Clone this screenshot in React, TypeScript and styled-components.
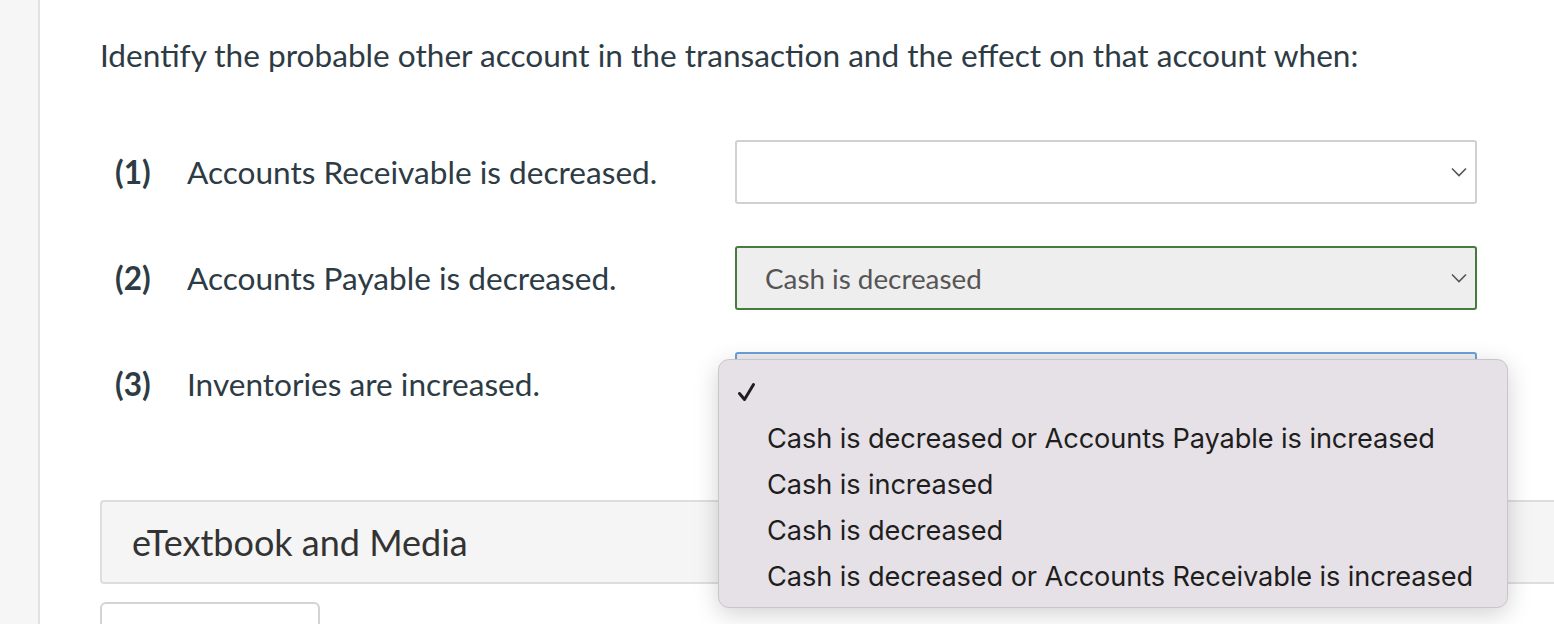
import React from 'react';
import styled, { createGlobalStyle } from 'styled-components';

const GlobalStyle = createGlobalStyle`
  html, body {
    margin: 0;
    padding: 0;
    background: #ffffff;
    overflow: hidden;
  }
  body {
    font-family: Lato, "Open Sans", sans-serif;
    color: #2d3b45;
  }
`;

const Page = styled.div`
  display: flex;
  height: 624px;
  overflow: hidden;
`;

const Sidebar = styled.div`
  width: 38px;
  flex-shrink: 0;
  background: #f6f6f6;
  border-right: 2px solid #e2e2e2;
`;

const Main = styled.div`
  flex: 1;
  padding: 35px 0 0 60px;
  position: relative;
`;

const Heading = styled.p`
  margin: 0 0 65px;
  font-size: 31.6px;
  line-height: 40px;
  color: #2d3b45;
`;

const QuestionList = styled.div`
  display: flex;
  flex-direction: column;
  gap: 42px;
  width: 1377px;
`;

const Row = styled.div`
  display: grid;
  grid-template-columns: 635px 742px;
  align-items: center;
  height: 64px;
`;

const Label = styled.div`
  display: flex;
  align-items: center;
  padding-left: 15px;
  font-size: 31.6px;
`;

const Num = styled.span`
  font-weight: 700;
  width: 72px;
`;

const Select = styled.div<{ $state?: 'correct' | 'focus' }>`
  position: relative;
  box-sizing: border-box;
  height: 64px;
  display: flex;
  align-items: center;
  padding: 0 28px;
  border-radius: 3px;
  font-size: 27.8px;
  color: #555555;
  background: ${(p) => (p.$state ? '#eeeeee' : '#ffffff')};
  border: 2px solid
    ${(p) =>
      p.$state === 'correct' ? '#477a3f' : p.$state === 'focus' ? '#6c9fdb' : '#d0d0d0'};
`;

const Chevron = styled.svg`
  position: absolute;
  right: 8px;
  top: 50%;
  margin-top: -5px;
  width: 16px;
  height: 10px;
`;

const Panel = styled.div`
  margin-top: 84px;
  margin-right: -20px;
  box-sizing: border-box;
  height: 84px;
  display: flex;
  align-items: center;
  padding-left: 30px;
  background: #f5f5f5;
  border: 2px solid #dedede;
  border-right: none;
  border-radius: 4px 0 0 4px;
  font-size: 36px;
  color: #333333;
`;

const TabBox = styled.div`
  margin-top: 18px;
  width: 220px;
  height: 40px;
  box-sizing: border-box;
  border: 2px solid #d3d3d3;
  border-radius: 6px 6px 0 0;
  background: #ffffff;
`;

const Menu = styled.div`
  position: absolute;
  left: 678px;
  top: 359px;
  width: 790px;
  height: 249px;
  box-sizing: border-box;
  padding: 9px 0 0 0;
  background: #e6e1e6;
  border: 1px solid #c9c5c9;
  border-radius: 11px;
  box-shadow: 0 6px 24px rgba(0, 0, 0, 0.18);
  font-family: Inter, "Liberation Sans", sans-serif;
  color: #1e1e1e;
`;

const Option = styled.div`
  position: relative;
  height: 46px;
  display: flex;
  align-items: center;
  padding-left: 48px;
  font-size: 27.2px;
  letter-spacing: -0.1px;
`;

const Check = styled.svg`
  position: absolute;
  left: 18px;
  top: 50%;
  margin-top: -10px;
  width: 19px;
  height: 20px;
`;

const ChevronIcon = () => (
  <Chevron viewBox="0 0 16 10">
    <path d="M1 1.5 L8 8.5 L15 1.5" fill="none" stroke="#555" strokeWidth="1.6" />
  </Chevron>
);

const questions = [
  { n: '(1)', text: 'Accounts Receivable is decreased.', value: '', state: undefined },
  { n: '(2)', text: 'Accounts Payable is decreased.', value: 'Cash is decreased', state: 'correct' as const },
  { n: '(3)', text: 'Inventories are increased.', value: '', state: 'focus' as const },
];

const options = [
  '',
  'Cash is decreased or Accounts Payable is increased',
  'Cash is increased',
  'Cash is decreased',
  'Cash is decreased or Accounts Receivable is increased',
];

const App: React.FC = () => {
  return (
    <>
      <GlobalStyle />
      <Page>
        <Sidebar />
        <Main>
          <Heading>
            Identify the probable other account in the transaction and the effect on that account when:
          </Heading>

          <QuestionList>
            {questions.map((q) => (
              <Row key={q.n}>
                <Label>
                  <Num>{q.n}</Num>
                  {q.text}
                </Label>
                <Select $state={q.state}>
                  {q.value}
                  <ChevronIcon />
                </Select>
              </Row>
            ))}
          </QuestionList>

          <Panel>eTextbook and Media</Panel>
          <TabBox />

          <Menu>
            {options.map((o, i) => (
              <Option key={i}>
                {i === 0 && (
                  <Check viewBox="0 0 19 20">
                    <path d="M2.5 11.5 L7.5 17.5 L16.5 2.5" fill="none" stroke="#1e1e1e" strokeWidth="3" strokeLinecap="round" strokeLinejoin="round" />
                  </Check>
                )}
                {o || '\u00a0'}
              </Option>
            ))}
          </Menu>
        </Main>
      </Page>
    </>
  );
};

export default App;
